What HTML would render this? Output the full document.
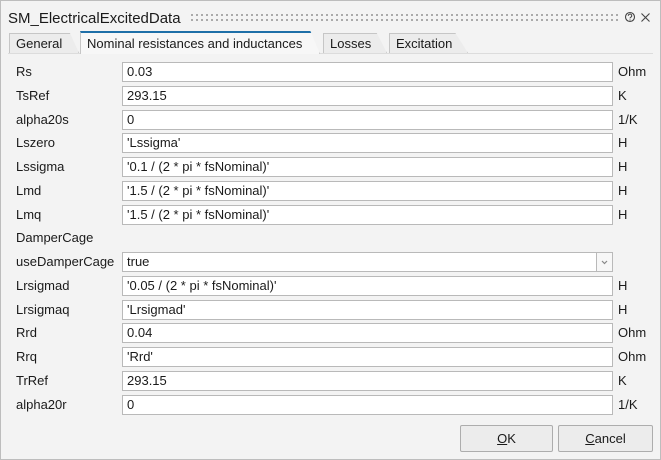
<!DOCTYPE html>
<html><head><meta charset="utf-8"><style>
*{margin:0;padding:0;box-sizing:border-box}
body{width:661px;height:460px;background:#f3f3f3;font-family:"Liberation Sans",Arial,sans-serif;font-size:13px;color:#1a1a1a;position:relative;overflow:hidden}
.win{position:absolute;left:0;top:0;width:661px;height:460px;border:1px solid #bdbdbd;background:#f3f3f3}
.abs{position:absolute}
.lbl{position:absolute;left:16px;line-height:20px}
.inp{position:absolute;left:122px;width:491px;height:20px;border:1px solid #b9b9b9;background:#fff;line-height:18px;padding-left:4px;white-space:nowrap}
.unit{position:absolute;left:618px;line-height:20px}
.tab{position:absolute;top:33px;height:20px;border:1px solid #c6c6c6;border-bottom:none;background:#ececec;line-height:19px;padding-left:6px;font-size:13px}
.btn{position:absolute;top:425px;height:27px;border:1px solid #adadad;background:#ececec;text-align:center;line-height:25px;border-radius:2px}
</style></head><body><div class="win"></div>
<div class="abs" style="left:8px;top:10px;font-size:15px">SM_ElectricalExcitedData</div>
<svg class="abs" style="left:190px;top:13px" width="430" height="10"><defs><pattern id="d" width="5" height="5" patternUnits="userSpaceOnUse"><rect x="1" y="1" width="2" height="2" fill="#aaa"/></pattern></defs><rect width="430" height="10" fill="url(#d)"/></svg>
<svg class="abs" style="left:624px;top:11px" width="12" height="12"><circle cx="6" cy="6" r="4.5" fill="none" stroke="#444" stroke-width="1.1"/><path d="M4.3 4.8a1.7 1.7 0 1 1 2.4 1.5c-.5.3-.7.6-.7 1.1" fill="none" stroke="#444" stroke-width="1"/><circle cx="6" cy="9" r=".6" fill="#444"/></svg>
<svg class="abs" style="left:640px;top:12px" width="11" height="11"><path d="M1.5 1.5l8 8M9.5 1.5l-8 8" stroke="#444" stroke-width="1.1"/></svg>
<div class="abs" style="left:8px;top:53px;width:645px;border-top:1px solid #dcdcdc"></div>
<div class="tab" style="left:9px;width:70px;clip-path:polygon(0 0,87% 0,100% 100%,0 100%)">General</div>
<div class="tab" style="left:323px;width:64px;clip-path:polygon(0 0,84% 0,100% 100%,0 100%)">Losses</div>
<div class="tab" style="left:389px;width:79px;clip-path:polygon(0 0,84% 0,100% 100%,0 100%)">Excitation</div>
<div class="tab" style="left:80px;top:31px;height:23px;width:240px;background:#f7f7f7;border-top:2px solid #1e6fa8;line-height:21px;clip-path:polygon(0 0,96% 0,100% 100%,0 100%)">Nominal resistances and inductances</div>
<div class="lbl" style="top:62px">Rs</div><div class="inp" style="top:62px">0.03</div><div class="unit" style="top:62px">Ohm</div>
<div class="lbl" style="top:86px">TsRef</div><div class="inp" style="top:86px">293.15</div><div class="unit" style="top:86px">K</div>
<div class="lbl" style="top:110px">alpha20s</div><div class="inp" style="top:110px">0</div><div class="unit" style="top:110px">1/K</div>
<div class="lbl" style="top:133px">Lszero</div><div class="inp" style="top:133px">'Lssigma'</div><div class="unit" style="top:133px">H</div>
<div class="lbl" style="top:157px">Lssigma</div><div class="inp" style="top:157px">'0.1 / (2 * pi * fsNominal)'</div><div class="unit" style="top:157px">H</div>
<div class="lbl" style="top:181px">Lmd</div><div class="inp" style="top:181px">'1.5 / (2 * pi * fsNominal)'</div><div class="unit" style="top:181px">H</div>
<div class="lbl" style="top:205px">Lmq</div><div class="inp" style="top:205px">'1.5 / (2 * pi * fsNominal)'</div><div class="unit" style="top:205px">H</div>
<div class="lbl" style="top:228px">DamperCage</div>
<div class="lbl" style="top:252px">useDamperCage</div><div class="inp" style="top:252px">true</div>
<div class="abs" style="left:596px;top:252px;width:17px;height:20px;border:1px solid #b9b9b9;background:#f7f7f7"><svg width="15" height="18"><path d="M5 8l2.5 2.5L10 8" fill="none" stroke="#888" stroke-width="1.2"/></svg></div>
<div class="lbl" style="top:276px">Lrsigmad</div><div class="inp" style="top:276px">'0.05 / (2 * pi * fsNominal)'</div><div class="unit" style="top:276px">H</div>
<div class="lbl" style="top:300px">Lrsigmaq</div><div class="inp" style="top:300px">'Lrsigmad'</div><div class="unit" style="top:300px">H</div>
<div class="lbl" style="top:323px">Rrd</div><div class="inp" style="top:323px">0.04</div><div class="unit" style="top:323px">Ohm</div>
<div class="lbl" style="top:347px">Rrq</div><div class="inp" style="top:347px">'Rrd'</div><div class="unit" style="top:347px">Ohm</div>
<div class="lbl" style="top:371px">TrRef</div><div class="inp" style="top:371px">293.15</div><div class="unit" style="top:371px">K</div>
<div class="lbl" style="top:395px">alpha20r</div><div class="inp" style="top:395px">0</div><div class="unit" style="top:395px">1/K</div>
<div class="btn" style="left:460px;width:93px"><u>O</u>K</div>
<div class="btn" style="left:558px;width:95px"><u>C</u>ancel</div>
</body></html>
